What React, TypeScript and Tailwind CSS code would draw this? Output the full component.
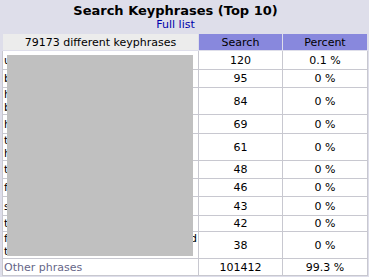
import React from "react";

type Row = { l1: string; l2?: string; right?: string; s: string; p: string; h: number };

const rows: Row[] = [
  { l1: "u", s: "120", p: "0.1 %", h: 19 },
  { l1: "b", s: "95", p: "0 %", h: 18 },
  { l1: "h", l2: "b", s: "84", p: "0 %", h: 25 },
  { l1: "h", s: "69", p: "0 %", h: 19 },
  { l1: "t", l2: "h", s: "61", p: "0 %", h: 25 },
  { l1: "t", s: "48", p: "0 %", h: 18 },
  { l1: "f", s: "46", p: "0 %", h: 18 },
  { l1: "s", s: "43", p: "0 %", h: 19 },
  { l1: "t", s: "42", p: "0 %", h: 16 },
  { l1: "f", l2: "t", right: "d", s: "38", p: "0 %", h: 27 },
];

export default function App() {
  const font = { fontFamily: '"DejaVu Sans", Verdana, sans-serif' };
  return (
    <div className="w-[369px] h-[277px] bg-[#DEDEEA] overflow-hidden" style={font}>
      <div className="relative px-[2px]">
        <div className="h-[33px] pr-[18px] flex flex-col items-center pt-[3px]">
          <div className="text-[13px] font-bold leading-[15px] text-black">Search Keyphrases (Top 10)</div>
          <a className="text-[11px] leading-[13px] text-[#0000AA]">Full list</a>
        </div>
        <table className="w-[365px] border-collapse bg-white text-[11px] leading-[13px] text-black table-fixed">
          <colgroup>
            <col className="w-[196px]" />
            <col className="w-[84px]" />
            <col className="w-[85px]" />
          </colgroup>
          <thead>
            <tr className="h-[17px]">
              <th className="bg-[#ECECEC] font-normal text-center p-0 border border-[#DEDEEA]">79173 different keyphrases</th>
              <th className="bg-[#8888DD] font-normal text-center p-0 border border-[#DEDEEA]">Search</th>
              <th className="bg-[#8888DD] font-normal text-center p-0 border border-[#DEDEEA]">Percent</th>
            </tr>
          </thead>
          <tbody>
            {rows.map((r, i) => (
              <tr key={i} style={{ height: r.h }}>
                <td className="border border-[#C8C8D0] px-[1px] py-0 text-left align-middle">
                  <div className="flex justify-between">
                    <div>
                      <div>{r.l1}</div>
                      {r.l2 && <div>{r.l2}</div>}
                    </div>
                    {r.right && <div className="self-start">{r.right}</div>}
                  </div>
                </td>
                <td className="border border-[#C8C8D0] p-0 text-center align-middle">{r.s}</td>
                <td className="border border-[#C8C8D0] p-0 text-center align-middle">{r.p}</td>
              </tr>
            ))}
            <tr className="h-[17px]">
              <td className="border border-[#C8C8D0] px-[1px] py-0 text-left text-[#666688]">Other phrases</td>
              <td className="border border-[#C8C8D0] p-0 text-center">101412</td>
              <td className="border border-[#C8C8D0] p-0 text-center">99.3 %</td>
            </tr>
          </tbody>
        </table>
        <div className="absolute left-[7px] top-[55px] w-[186px] h-[201px] bg-[#C0C0C0]" />
      </div>
    </div>
  );
}
